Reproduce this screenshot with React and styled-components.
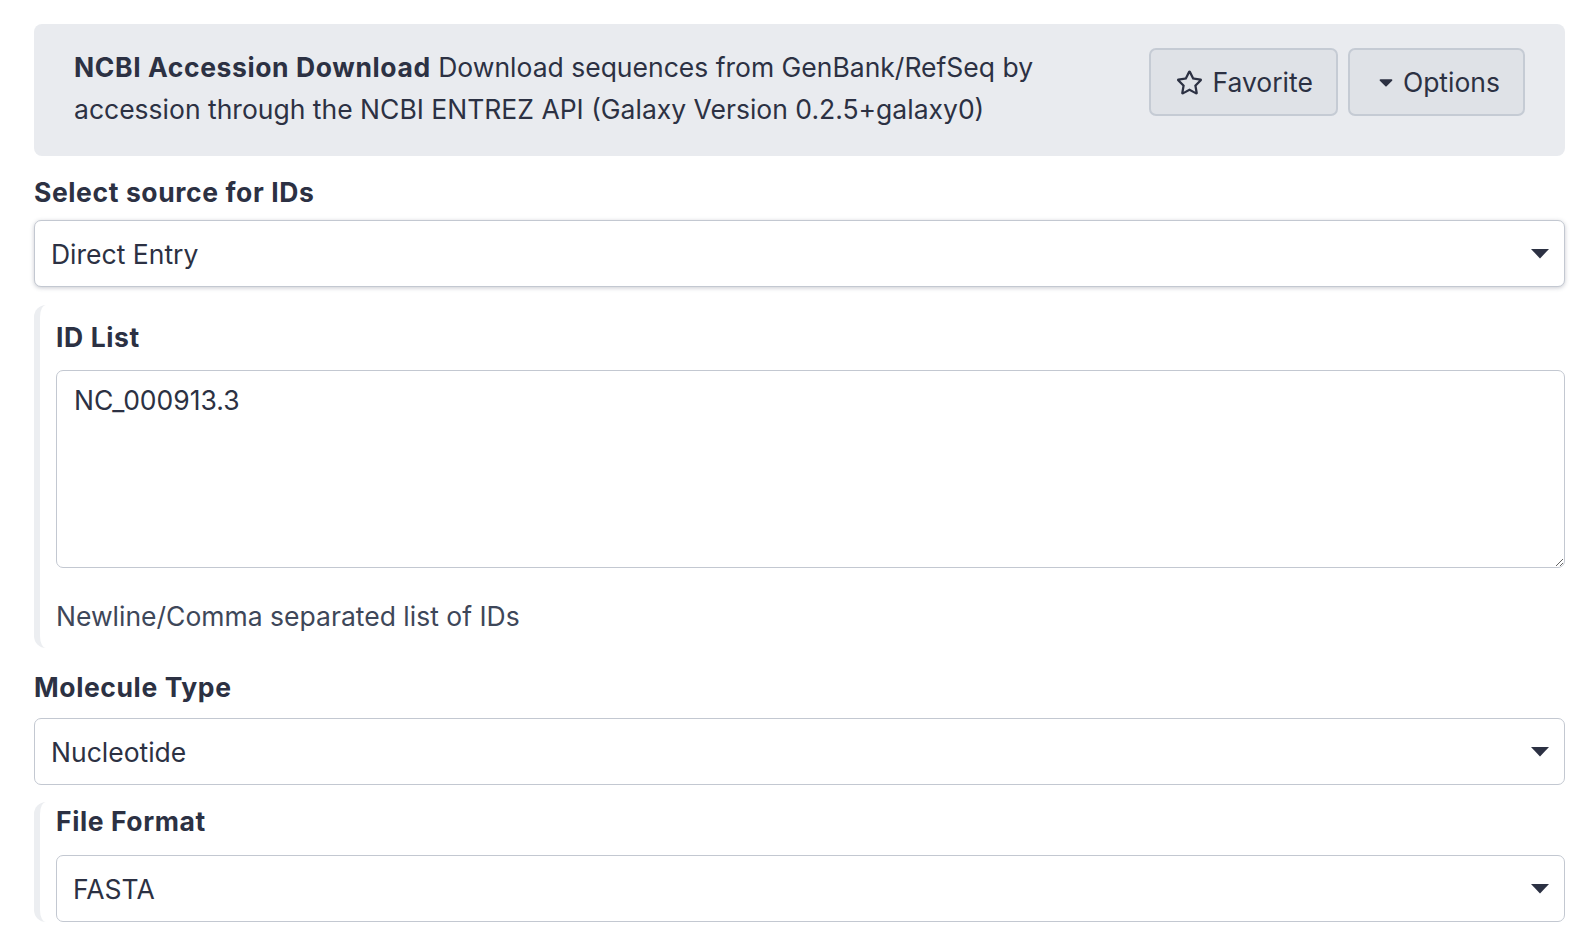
import React from 'react'
import styled, { createGlobalStyle } from 'styled-components'
import { FaRegStar, FaCaretDown } from 'react-icons/fa'

const Global = createGlobalStyle`
  body {
    margin: 0;
    background: #fff;
    font-family: Inter, "Noto Sans", sans-serif;
    color: #2c3143;
  }
`

const Page = styled.div`
  padding: 24px 31px 0 34px;
`

const Header = styled.div`
  display: flex;
  align-items: flex-start;
  background: #e9ebef;
  border-radius: 8px;
  padding: 22px 40px 26px 40px;
  min-height: 84px;
`

const Title = styled.div`
  flex: 1;
  font-size: 26.5px;
  line-height: 42px;
  padding-right: 40px;
  b { font-weight: 700; letter-spacing: 0.6px; }
`

const Buttons = styled.div`
  display: flex;
  gap: 10px;
  margin-top: 2px;
`

const Button = styled.button`
  display: flex;
  align-items: center;
  gap: ${p => p.$gap || 9}px;
  height: 68px;
  padding: 0 23px 0 25px;
  background: #dfe2e7;
  border: 2px solid #c5cbd4;
  border-radius: 7px;
  font-family: inherit;
  font-size: 26.5px;
  color: #2c3143;
  cursor: pointer;
  svg { flex-shrink: 0; }
`

const Label = styled.div`
  font-size: 26.5px;
  font-weight: 700;
  letter-spacing: 0.6px;
  line-height: 39px;
  margin: ${p => p.$mt || 0}px 0 ${p => p.$mb || 9}px;
`

const Select = styled.div`
  display: flex;
  align-items: center;
  justify-content: space-between;
  height: 67px;
  box-sizing: border-box;
  padding: 0 15px 0 16px;
  border: 1.5px solid #c3c8d1;
  border-radius: 7px;
  background: #fff;
  font-size: 26.5px;
  box-shadow: ${p => (p.$focus ? '0 1px 4px rgba(60, 70, 90, 0.28)' : 'none')};
`

const Section = styled.div`
  border-left: 6px solid #eceef1;
  border-radius: 12px 0 0 12px;
  padding: ${p => p.$pt}px 0 ${p => p.$pb}px 16px;
  margin-top: ${p => p.$mt}px;
`

const TextArea = styled.textarea`
  display: block;
  width: 100%;
  box-sizing: border-box;
  height: 198px;
  padding: 10px 17px;
  border: 1.5px solid #c3c8d1;
  border-radius: 7px;
  font-family: inherit;
  font-size: 26.5px;
  line-height: 39px;
  color: #2c3143;
  resize: vertical;
  outline: none;
`

const Help = styled.div`
  font-size: 26.5px;
  line-height: 39px;
  color: #3e4759;
  margin-top: 29px;
`

const Caret = () => (
  <svg width="18" height="10" viewBox="0 0 18 10">
    <path d="M0 0 H18 L9 9.5 Z" fill="#2c3143" />
  </svg>
)

export default function App() {
  return (
    <Page>
      <Global />
      <Header>
        <Title>
          <b>NCBI Accession Download</b> Download sequences from GenBank/RefSeq by
          accession through the NCBI ENTREZ API (Galaxy Version 0.2.5+galaxy0)
        </Title>
        <Buttons>
          <Button>
            <FaRegStar size={27} />
            Favorite
          </Button>
          <Button $gap={6}>
            <FaCaretDown size={22} />
            Options
          </Button>
        </Buttons>
      </Header>

      <Label $mt={17} $mb={8}>Select source for IDs</Label>
      <Select $focus>
        Direct Entry
        <Caret />
      </Select>

      <Section $mt={18} $pt={13} $pb={12}>
        <Label $mb={13}>ID List</Label>
        <TextArea defaultValue="NC_000913.3" />
        <Help>Newline/Comma separated list of IDs</Help>
      </Section>

      <Label $mt={20} $mb={11}>Molecule Type</Label>
      <Select>
        Nucleotide
        <Caret />
      </Select>

      <Section $mt={17} $pt={0} $pb={0}>
        <Label $mb={14}>File Format</Label>
        <Select>
          FASTA
          <Caret />
        </Select>
      </Section>
    </Page>
  )
}
